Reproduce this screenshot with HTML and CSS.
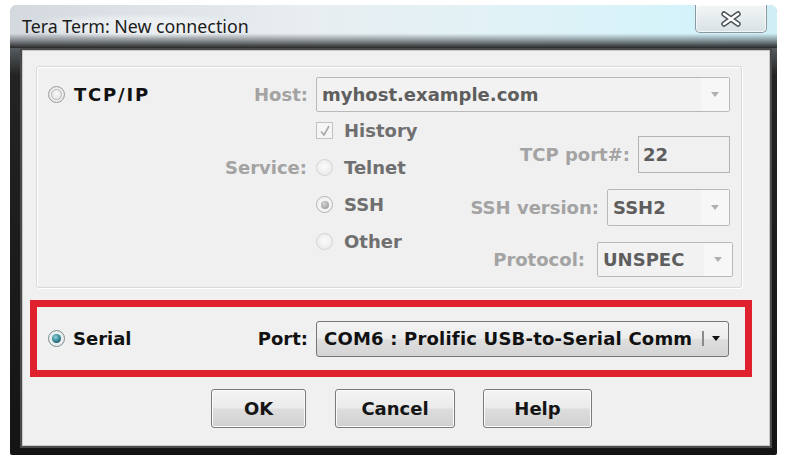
FILE: index.html
```html
<!DOCTYPE html>
<html>
<head>
<meta charset="utf-8">
<link rel="stylesheet" href="styles.css">
</head>
<body>
<div class="window">
  <div class="titlebar">
    <span class="title">Tera Term: New connection</span>
    <div class="close">
      <svg width="22" height="16" viewBox="0 0 22 16">
        <path d="M4 3 L18 13 M18 3 L4 13" stroke="#4d5559" stroke-width="5.5" stroke-linecap="round" fill="none"/>
        <path d="M4 3 L18 13 M18 3 L4 13" stroke="#ffffff" stroke-width="2.6" stroke-linecap="round" fill="none"/>
      </svg>
    </div>
  </div>
  <div class="client">
    <div class="group">
      <div class="row1">
        <div class="tcp-cell">
          <span class="radio radio-tcp"></span>
          <span class="opt-label">TCP/IP</span>
        </div>
        <span class="dim-label">Host:</span>
        <div class="combo host-combo">
          <span class="val">myhost.example.com</span>
          <span class="drop-btn"><span class="arrow gray"></span></span>
        </div>
      </div>
      <div class="lower">
        <div class="service-col">
          <span class="dim-label service">Service:</span>
        </div>
        <div class="radio-col">
          <div class="ropt">
            <span class="check">
              <svg width="14" height="14" viewBox="0 0 14 14"><path d="M3 7.5 L6 11 L11 2" stroke="#a8a8a8" stroke-width="1.6" fill="none"/></svg>
            </span>
            <span class="dis-label">History</span>
          </div>
          <div class="ropt">
            <span class="radio radio-dis"></span>
            <span class="dis-label">Telnet</span>
          </div>
          <div class="ropt">
            <span class="radio radio-dis-on"></span>
            <span class="dis-label">SSH</span>
          </div>
          <div class="ropt">
            <span class="radio radio-dis"></span>
            <span class="dis-label">Other</span>
          </div>
        </div>
        <div class="right-col">
          <div class="field">
            <span class="dim-label">TCP port#:</span>
            <div class="textbox port-box"><span class="val">22</span></div>
          </div>
          <div class="field">
            <span class="dim-label">SSH version:</span>
            <div class="combo ver-combo">
              <span class="val">SSH2</span>
              <span class="drop-btn"><span class="arrow gray"></span></span>
            </div>
          </div>
          <div class="field proto">
            <span class="dim-label">Protocol:</span>
            <div class="combo proto-combo">
              <span class="val">UNSPEC</span>
              <span class="drop-btn"><span class="arrow gray"></span></span>
            </div>
          </div>
        </div>
      </div>
    </div>
    <div class="serial-box">
      <span class="radio radio-serial"></span>
      <span class="opt-label serial-label">Serial</span>
      <span class="port-label">Port:</span>
      <div class="port-combo">
        <span class="port-val">COM6 : Prolific USB-to-Serial Comm</span>
        <span class="sep"></span>
        <span class="arrow black"></span>
      </div>
    </div>
    <div class="buttons">
      <div class="btn btn-ok">OK</div>
      <div class="btn btn-cancel">Cancel</div>
      <div class="btn btn-help">Help</div>
    </div>
  </div>
</div>
</body>
</html>
```
FILE: styles.css
```css
* { box-sizing: border-box; }
html, body { margin: 0; padding: 0; background: #ffffff; }
body {
  width: 788px;
  height: 466px;
  overflow: hidden;
  padding: 5px 0 0 10px;
  font-family: "DejaVu Sans", sans-serif;
}
.window {
  width: 767px;
  height: 450px;
  border-radius: 7px 7px 2px 2px;
  background: linear-gradient(to bottom, #b9c3c8 0px, #5b6266 40px, #232323 70px, #141414 100%);
  display: flex;
  flex-direction: column;
  overflow: hidden;
}
.titlebar {
  height: 43px;
  flex: none;
  display: flex;
  align-items: flex-start;
  padding-left: 12px;
  background:
    linear-gradient(to bottom, rgba(0,0,0,0) 0%, rgba(0,0,0,0) 66%, rgba(70,76,80,0.55) 82%, rgba(30,30,30,0.95) 100%),
    linear-gradient(to right, #d3d9de 0%, #dfe5e9 22%, #e8eef1 40%, #e2f2f6 62%, #d6f3fa 85%, #cfeff7 100%);
}
.title {
  font-family: "Noto Sans", "DejaVu Sans", sans-serif;
  font-size: 17.8px;
  color: #1c1c1c;
  margin-top: 9px;
  letter-spacing: 0px;
  padding: 0 6px 0 0;
  background: radial-gradient(ellipse at center, rgba(255,255,255,0.45) 40%, rgba(255,255,255,0) 75%);
}
.close {
  margin-left: auto;
  margin-right: 10px;
  width: 72px;
  height: 28px;
  border: 1px solid #8d979c;
  border-top: none;
  border-radius: 0 0 5px 5px;
  background: linear-gradient(to bottom, #f3f6f7 0%, #e6ecee 50%, #d8e1e4 100%);
  display: flex;
  align-items: center;
  justify-content: center;
  box-shadow: inset 0 0 0 1px rgba(255,255,255,0.7);
}
.client {
  flex: 1;
  margin: 0 5px 7px 10px;
  background: #f0f0f0;
  border: 2px solid #4a4a4a;
  box-shadow: inset 0 0 0 1px #c8c8c8;
  display: flex;
  flex-direction: column;
}

/* group box */
.group {
  margin: 16px 0 0 14px;
  width: 706px;
  height: 222px;
  border: 1px solid #d9d9d9;
  border-radius: 3px;
  box-shadow: inset 1px 1px 0 #ffffff, 1px 1px 0 #ffffff;
  padding: 10px 11px 0 0;
  display: flex;
  flex-direction: column;
}
.row1 {
  height: 35px;
  display: flex;
  align-items: center;
}
.tcp-cell {
  flex: 1;
  display: flex;
  align-items: center;
  padding-left: 11px;
}
.opt-label {
  font-weight: bold;
  font-size: 18px;
  color: #121212;
  margin-left: 9px;
}
.tcp-cell .opt-label { letter-spacing: 1.8px; }
.dim-label {
  font-weight: bold;
  font-size: 18px;
  color: #a3a3a3;
  margin-right: 8px;
}
.dis-label {
  font-weight: bold;
  font-size: 18px;
  color: #6f6f6f;
  margin-left: 11px;
}
.val {
  font-weight: bold;
  font-size: 18px;
  color: #5e5e5e;
}
.combo {
  display: flex;
  align-items: center;
  border: 1px solid #b9b9b9;
  border-radius: 2px;
  background: #f2f2f2;
  padding-left: 5px;
}
.drop-btn {
  margin-left: auto;
  align-self: stretch;
  width: 28px;
  display: flex;
  align-items: center;
  justify-content: center;
  background: #f7f7f7;
}
.host-combo { width: 414px; height: 35px; }
.ver-combo { width: 123px; height: 37px; }
.proto-combo { width: 136px; height: 35px; }
.textbox {
  display: flex;
  align-items: center;
  border: 1px solid #b3b3b3;
  background: #f0f0f0;
  padding-left: 4px;
}
.port-box { width: 92px; height: 37px; }
.arrow {
  width: 0;
  height: 0;
  border-left: 4px solid transparent;
  border-right: 4px solid transparent;
  border-top: 5px solid #b0b0b0;
}
.arrow.black { border-top-color: #111111; }

.lower {
  flex: 1;
  display: flex;
}
.service-col {
  width: 279px;
  display: flex;
  flex-direction: column;
  align-items: flex-end;
  padding-top: 37px;
}
.service {
  height: 37px;
  line-height: 37px;
  margin-right: 9px;
}
.radio-col {
  width: 140px;
  display: flex;
  flex-direction: column;
}
.ropt {
  height: 37px;
  display: flex;
  align-items: center;
}
.check {
  width: 17px;
  height: 17px;
  border: 1px solid #c2c2c2;
  background: #f6f6f6;
  display: flex;
  align-items: center;
  justify-content: center;
}
.right-col {
  flex: 1;
  display: flex;
  flex-direction: column;
  align-items: flex-end;
  padding-top: 24px;
  gap: 16px;
}
.field {
  display: flex;
  align-items: center;
}
.field .dim-label { margin-right: 8px; }
.field.proto { margin-right: -3px; }
.field.proto .dim-label { margin-right: 12px; }

/* radios */
.radio {
  width: 17px;
  height: 17px;
  border-radius: 50%;
  flex: none;
  display: flex;
  align-items: center;
  justify-content: center;
}
.radio-tcp {
  border: 1px solid #9e9e9e;
  background: radial-gradient(circle at 50% 45%, #f8f8f8 0%, #dcdcdc 70%);
  box-shadow: inset 0 0 0 2px #eeeeee, inset 0 0 0 3px #bdbdbd;
}
.radio-dis {
  border: 1px solid #d3d3d3;
  background: radial-gradient(circle at 50% 45%, #fbfbfb 0%, #eaeaea 80%);
}
.radio-dis-on {
  border: 1px solid #b2b2b2;
  background: #f3f3f3;
}
.radio-dis-on::after {
  content: "";
  width: 8px;
  height: 8px;
  border-radius: 50%;
  background: radial-gradient(circle at 40% 35%, #d4d4d4, #8e8e8e);
}
.radio-serial {
  border: 1px solid #7d8a8f;
  background: #e9eeee;
}
.radio-serial::after {
  content: "";
  width: 9px;
  height: 9px;
  border-radius: 50%;
  background: radial-gradient(circle at 40% 35%, #8fd4df 0%, #2f7d8c 55%, #163e48 100%);
}

/* serial box */
.serial-box {
  margin: 12px 0 0 8px;
  width: 722px;
  height: 77px;
  border: 7px solid #e0222e;
  display: flex;
  align-items: center;
  padding: 0 16px 0 11px;
}
.serial-label { flex: 1; margin-left: 8px; }
.port-label {
  font-weight: bold;
  font-size: 18px;
  color: #121212;
  margin-right: 8px;
}
.port-combo {
  width: 413px;
  height: 36px;
  border: 1px solid #767676;
  border-radius: 3px;
  background: linear-gradient(to bottom, #f4f4f4 0%, #ececec 48%, #dedede 52%, #d4d4d4 100%);
  display: flex;
  align-items: center;
  padding: 0 8px 0 7px;
}
.port-val {
  font-weight: bold;
  font-size: 18px;
  color: #111111;
  white-space: nowrap;
  letter-spacing: 0.2px;
}
.sep {
  width: 2px;
  height: 15px;
  background: #8a8a8a;
  margin-left: auto;
  margin-right: 8px;
}

/* buttons */
.buttons {
  margin: 12px 0 0 189px;
  display: flex;
  gap: 28px;
}
.btn {
  height: 39px;
  border: 1px solid #7a7a7a;
  border-radius: 3px;
  background: linear-gradient(to bottom, #f4f4f4 0%, #ebebeb 48%, #dddddd 52%, #d0d0d0 100%);
  box-shadow: inset 0 0 0 1px #fbfbfb;
  display: flex;
  align-items: center;
  justify-content: center;
  font-weight: bold;
  font-size: 18px;
  color: #151515;
}
.btn-ok { width: 95px; }
.btn-cancel { width: 120px; margin-left: 1px; }
.btn-help { width: 109px; }
```
